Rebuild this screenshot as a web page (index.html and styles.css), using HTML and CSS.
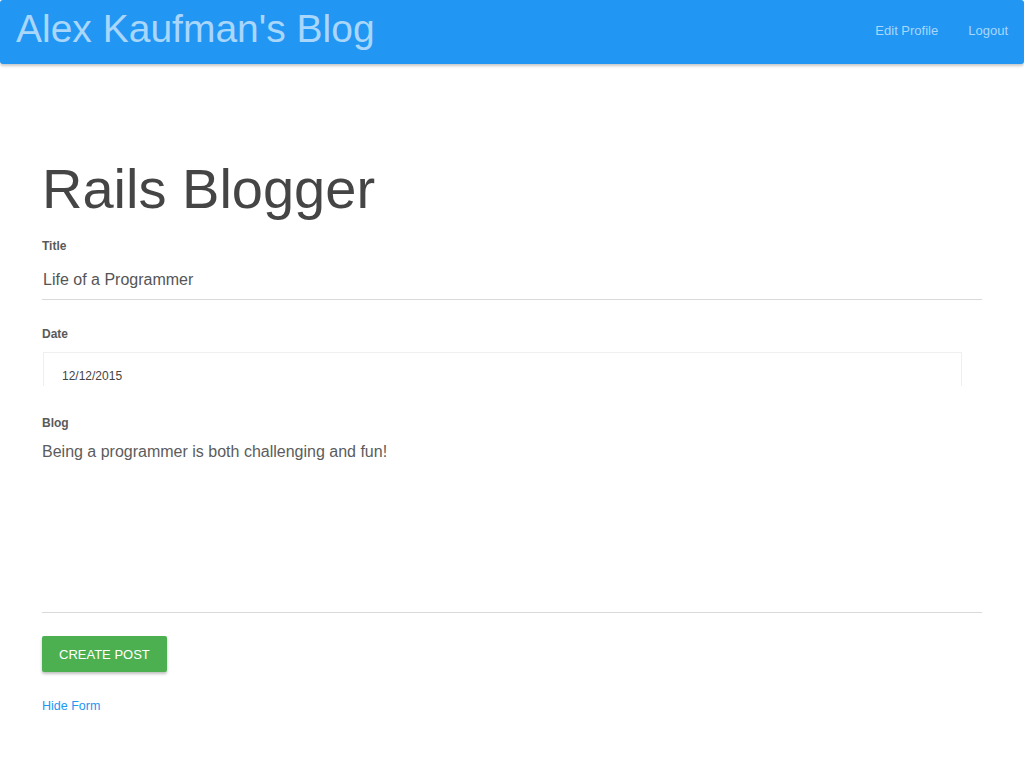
FILE: index.html
```html
<!DOCTYPE html>
<html lang="en">
<head>
<meta charset="utf-8">
<title>Rails Blogger</title>
<link rel="stylesheet" href="styles.css">
</head>
<body>
<nav class="navbar">
  <a class="brand" href="#">Alex Kaufman's Blog</a>
  <ul class="nav-links">
    <li><a href="#">Edit Profile</a></li>
    <li><a href="#">Logout</a></li>
  </ul>
</nav>
<main class="container">
  <h1 class="page-title">Rails Blogger</h1>
  <form class="post-form">
    <div class="field">
      <label class="field-label" for="title">Title</label>
      <input class="text-input" id="title" type="text" value="Life of a Programmer">
    </div>
    <div class="field field-date">
      <label class="field-label" for="date">Date</label>
      <div class="date-input" id="date">12/12/2015</div>
    </div>
    <div class="field field-blog">
      <label class="field-label" for="blog">Blog</label>
      <textarea class="text-area" id="blog">Being a programmer is both challenging and fun!</textarea>
    </div>
    <button class="btn-create" type="button">CREATE POST</button>
  </form>
  <a class="hide-link" href="#">Hide Form</a>
</main>
</body>
</html>
```

FILE: styles.css
```css
* {
  box-sizing: border-box;
}

html, body {
  margin: 0;
  padding: 0;
  background: #ffffff;
  font-family: "Liberation Sans", Arial, sans-serif;
}

.navbar {
  height: 64px;
  background: #2196f3;
  border-radius: 3px;
  box-shadow: 0 2px 3px rgba(0, 0, 0, 0.22);
  display: flex;
  align-items: center;
  justify-content: space-between;
  padding: 0 16px 0 16px;
}

.brand {
  color: #a9d6fb;
  text-decoration: none;
  font-size: 39px;
  line-height: 56px;
  margin-top: -6px;
}

.nav-links {
  list-style: none;
  display: flex;
  gap: 30px;
  margin: -2px 0 0;
  padding: 0;
}

.nav-links a {
  color: #a9d6fb;
  text-decoration: none;
  font-size: 13px;
  line-height: 20px;
}

.container {
  padding: 0 42px;
}

.page-title {
  margin: 93px 0 17px;
  font-size: 56px;
  line-height: 64px;
  font-weight: 400;
  color: #454545;
}

.post-form {
  display: flex;
  flex-direction: column;
  align-items: flex-start;
}

.field {
  width: 100%;
}

.field-label {
  display: block;
  font-size: 12px;
  line-height: 16px;
  font-weight: 700;
  color: #5a5a5a;
}

.text-input {
  display: block;
  width: 100%;
  height: 46px;
  margin: 0;
  padding: 6px 0 0 1px;
  border: none;
  border-bottom: 1px solid #d9d9d9;
  outline: none;
  background: transparent;
  font-family: inherit;
  font-size: 16px;
  color: #555555;
}

.field-date {
  margin-top: 26px;
}

.date-input {
  width: 919px;
  height: 34px;
  margin: 10px 0 0 1px;
  padding: 15px 0 0 18px;
  border: 1px solid #efefef;
  border-bottom: none;
  font-size: 12px;
  line-height: 16px;
  color: #444444;
}

.field-blog {
  margin-top: 29px;
}

.text-area {
  display: block;
  width: 100%;
  height: 182px;
  margin: 0;
  padding: 10px 0 0 0;
  border: none;
  border-bottom: 1px solid #d9d9d9;
  outline: none;
  resize: none;
  background: transparent;
  font-family: inherit;
  font-size: 16px;
  line-height: 22px;
  color: #5c5c5c;
}

.btn-create {
  margin-top: 23px;
  height: 36px;
  padding: 0 17px;
  border: none;
  border-radius: 2px;
  background: #4caf50;
  color: #ffffff;
  font-family: inherit;
  font-size: 13px;
  box-shadow: 0 2px 3px rgba(0, 0, 0, 0.25);
  cursor: pointer;
}

.hide-link {
  display: inline-block;
  margin-top: 26px;
  font-size: 12.5px;
  line-height: 16px;
  color: #2196f3;
  text-decoration: none;
}
```
